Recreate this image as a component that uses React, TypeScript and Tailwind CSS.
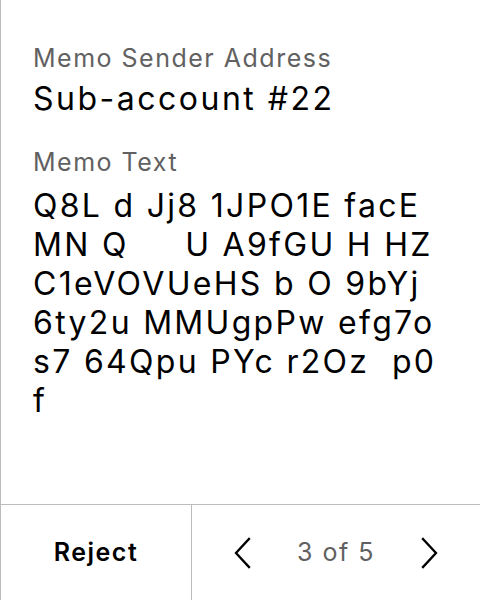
import React from 'react';

const memo = 'Q8L d Jj8 1JPO1E facE MN Q     U A9fGU H HZ C1eVOVUeHS b O 9bYj 6ty2u MMUgpPw efg7o s7 64Qpu PYc r2Oz  p0 f';

const Chevron: React.FC<{ dir: 'left' | 'right' }> = ({ dir }) => (
  <svg width="18" height="32" viewBox="0 0 18 32" fill="none" stroke="#000" strokeWidth="2.3" strokeLinecap="square">
    {dir === 'left' ? <path d="M16 2 L3 16 L16 30" /> : <path d="M2 2 L15 16 L2 30" />}
  </svg>
);

const App: React.FC = () => {
  return (
    <div className="w-[480px] h-[600px] flex flex-col bg-white border-l border-[#bcbcbc] font-['Inter',sans-serif] text-black">
      <div className="flex-1 pl-8 pr-6 pt-[42px]">
        <div className="text-[25px] leading-[32px] tracking-[1.5px] text-[#616161]">Memo Sender Address</div>
        <div className="text-[32px] leading-[40px] tracking-[2.5px] mt-[5px]">Sub-account #22</div>
        <div className="text-[25px] leading-[32px] tracking-[1.5px] text-[#616161] mt-[27px]">Memo Text</div>
        <div className="text-[32px] leading-[39px] tracking-[2.3px] mt-[8px] whitespace-pre-wrap break-words">{memo}</div>
      </div>
      <div className="h-[96px] flex border-t border-[#bcbcbc]">
        <button className="w-[191px] border-r border-[#bcbcbc] flex items-center justify-center text-[25px] font-semibold tracking-[1.5px]">
          Reject
        </button>
        <div className="flex-1 flex items-center justify-center gap-[46px]">
          <Chevron dir="left" />
          <span className="text-[25px] tracking-[1.5px] text-[#616161]">3 of 5</span>
          <Chevron dir="right" />
        </div>
      </div>
    </div>
  );
};

export default App;
